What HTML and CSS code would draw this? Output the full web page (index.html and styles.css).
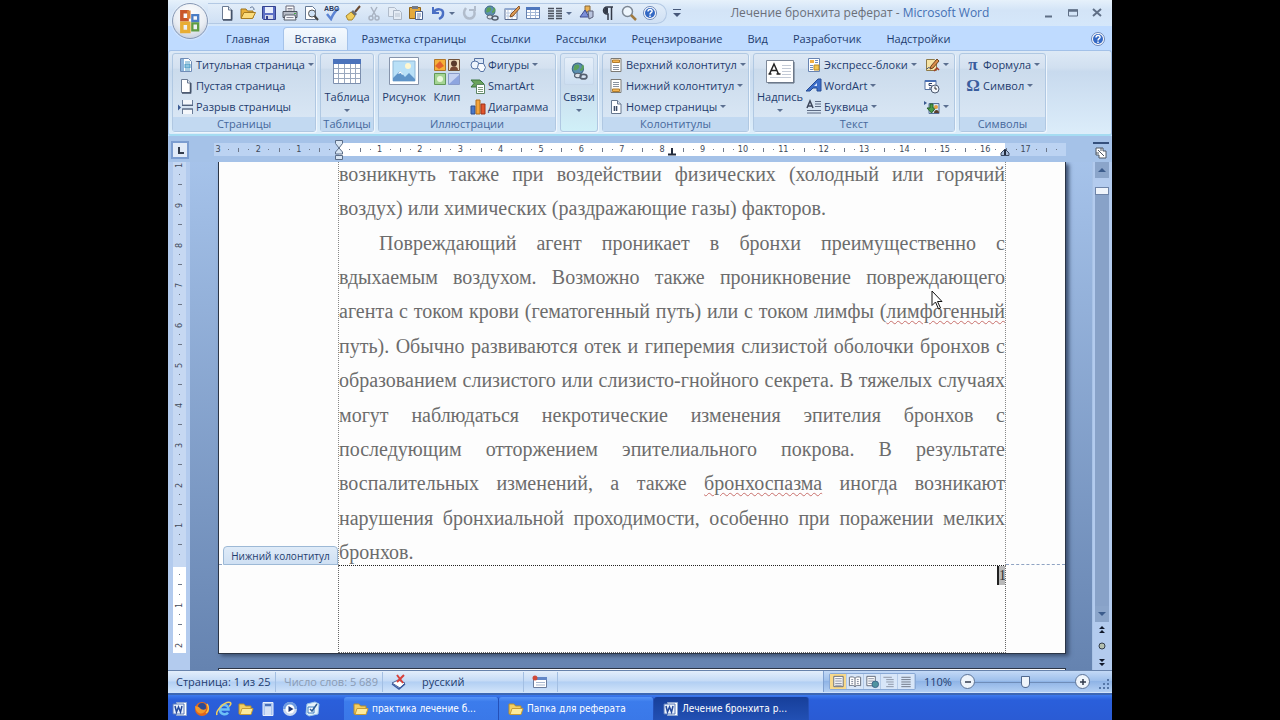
FILE: index.html
```
<!DOCTYPE html>
<html lang="ru">
<head>
    <meta charset="UTF-8">
    <meta name="viewport" content="width=device-width, initial-scale=1.0">
    <title>Лечение бронхита реферат - Microsoft Word</title>
    <link rel="stylesheet" href="styles.css">
</head>
<body>
    <!-- общие иконки -->
    <svg class="sprite" width="0" height="0">
        <symbol id="i-new" viewBox="0 0 16 16"><path d="M3.500 1.500h6l3.500 3.500v9.500h-9.500z" fill="#fff" stroke="#6a7a92"/><path d="M9.500 1.500v3.500h3.500" fill="#dfe7f2" stroke="#6a7a92"/><path d="M12.500 5v10H4" fill="none" stroke="#445268" stroke-width="1.500"/></symbol>
        <symbol id="i-folder" viewBox="0 0 16 16"><path d="M1 13V4h5l1.500 2H13v7z" fill="#e9b13a" stroke="#9d7420"/><path d="M1 13.500L4 7.500h11.500l-3 6z" fill="#fbdc7c" stroke="#a87d22"/><path d="M10 3c2-2 4-1 4 2" fill="none" stroke="#5a6f90"/></symbol>
        <symbol id="i-dir" viewBox="0 0 16 16"><path d="M1 13V3h5l1.500 2H13v8z" fill="#f4cf62" stroke="#b58d2c"/><path d="M2 13.500L4 7.500h11l-2 6z" fill="#fdeb9c" stroke="#c79d35"/></symbol>
        <symbol id="i-save" viewBox="0 0 16 16"><path d="M1.500 1.500h13v13h-12l-1-1z" fill="#5c6fc4" stroke="#33418f"/><path d="M4 2h8v6H4z" fill="#e8eefc"/><path d="M4 10h8v4H4z" fill="#d5d9ea"/><path d="M5 11h2v3H5z" fill="#33418f"/></symbol>
        <symbol id="i-print" viewBox="0 0 16 16"><path d="M4 7V1h8v6" fill="#fff" stroke="#667"/><path d="M1 6.500h14v6H1z" fill="#b6bbc6" stroke="#4c525e"/><path d="M3 10h10l1 5H2z" fill="#f4f6fa" stroke="#555c68"/><path d="M5.500 3.500h5M5.500 5h5M4.500 12.500h7" stroke="#889"/><path d="M12 8h2v1h-2z" fill="#4a4"/></symbol>
        <symbol id="i-preview" viewBox="0 0 16 16"><path d="M2.500 1.500h7l3 3v10h-10z" fill="#fff" stroke="#667a95"/><circle cx="9" cy="8.500" r="3.500" fill="#cfe2f6" stroke="#555"/><path d="M11.500 11l3.500 4" stroke="#444" stroke-width="2"/></symbol>
        <symbol id="i-brush" viewBox="0 0 16 16"><path d="M15 1l-5 6" stroke="#6a4a30" stroke-width="2"/><path d="M8 5l4 4-2 2-4-4z" fill="#6c7076"/><path d="M6 7l4 4-3 4H3L1 11z" fill="#f0cd5c" stroke="#a8862e"/></symbol>
        <symbol id="i-cut" viewBox="0 0 16 16"><path d="M5 2l5 9M11 2l-5 9" stroke="#a9b3c2" stroke-width="1.500"/><circle cx="5" cy="13" r="2" fill="none" stroke="#a9b3c2" stroke-width="1.500"/><circle cx="11" cy="13" r="2" fill="none" stroke="#a9b3c2" stroke-width="1.500"/></symbol>
        <symbol id="i-copy" viewBox="0 0 16 16"><path d="M1.500 2.500h6l2 2v7h-8z" fill="#e5ecf5" stroke="#b1bccb"/><path d="M6.500 5.500h6l2 2v7h-8z" fill="#e5ecf5" stroke="#aab5c4"/><path d="M8 9h5M8 11h5" stroke="#b9c3d0"/></symbol>
        <symbol id="i-paste" viewBox="0 0 16 16"><path d="M1.500 2.500h11v11h-11z" fill="#e3a93e" stroke="#8f6318"/><path d="M4 1h6v3H4z" fill="#757b88"/><path d="M7.500 6.500h7v8h-7z" fill="#fff" stroke="#4b6290"/><path d="M9 9h4M9 11h4M9 13h3" stroke="#6b82b0"/></symbol>
        <symbol id="i-undo" viewBox="0 0 16 16"><path d="M3 2v6h6" fill="none" stroke="#4a6fc4" stroke-width="2"/><path d="M3 8c3-5 11-5 10 1 0 3-2 4-4 5" fill="none" stroke="#4a6fc4" stroke-width="2.500"/></symbol>
        <symbol id="i-redo" viewBox="0 0 16 16"><path d="M4 3C0 8 3 14 8 13.500 13 13 13 8 12 6" fill="none" stroke="#b1bccb" stroke-width="2.500"/><path d="M7 5h6V1" fill="none" stroke="#b1bccb" stroke-width="2"/></symbol>
        <symbol id="i-link" viewBox="0 0 16 16"><circle cx="7" cy="6" r="5" fill="#5c8fb0" stroke="#3e6a86"/><path d="M4 3c3-2 5 0 4 2S4 8 3 7z" fill="#5aa05a"/><path d="M9 7c2 0 3-2 2-4" stroke="#5aa05a" stroke-width="2" fill="none"/><ellipse cx="7" cy="12" rx="3" ry="2" fill="#dde3ea" stroke="#556070"/><ellipse cx="12" cy="13" rx="3" ry="2" fill="none" stroke="#556070" stroke-width="1.500"/></symbol>
        <symbol id="i-edit" viewBox="0 0 16 16"><path d="M1 3.500h12v11H1z" fill="#fff" stroke="#56698c"/><path d="M1 3h12v2H1z" fill="#91a9d0"/><path d="M4 5v9M8 5v9M1 8h12M1 11h12" stroke="#b8c8df"/><path d="M15 1L7 9l-1 3 3-1 7-8z" fill="#dd9b53" stroke="#85532a"/></symbol>
        <symbol id="i-table" viewBox="0 0 16 16"><path d="M1.500 2.500h13v11h-13z" fill="#fff" stroke="#6580ad"/><path d="M1 2h14v3H1z" fill="#4f77bd"/><path d="M5.500 5v8M10.500 5v8M2 7.500h12M2 10.500h12" stroke="#a5b8d6"/></symbol>
        <symbol id="i-cols" viewBox="0 0 16 16"><path d="M1 3.500h6M1 6h6M1 8.500h6M1 11h6M1 13.500h6M9 3.500h6M9 6h6M9 8.500h6M9 11h6M9 13.500h6" stroke="#4a505c" stroke-width="1.500"/></symbol>
        <symbol id="i-shapes" viewBox="0 0 16 16"><path d="M4.500 1.500h9v7h-9z" fill="#dbe7f7" stroke="#5773a4"/><circle cx="5" cy="8" r="4" fill="#eef4fc" stroke="#5773a4"/><path d="M8.500 6.500h5l2 4-2 4h-3l-3-4z" fill="#f6f9fd" stroke="#5773a4"/></symbol>
        <symbol id="i-qshapes" viewBox="0 0 16 16"><path d="M6 1h5v6H6z" fill="#eab254" stroke="#8a6838"/><path d="M1 12l5-7 4 7z" fill="#7c8fd8" stroke="#3e4d92"/><path d="M9 6h5v6l-4 2z" fill="#b9c4de" stroke="#5a5f78"/></symbol>
        <symbol id="i-para" viewBox="0 0 16 16"><path d="M13 2H7a3.500 3.500 0 000 7h1v6M11.500 2v13" fill="none" stroke="#333a48" stroke-width="1.500"/><path d="M8 2.500H7a3 3 0 000 6h1z" fill="#333a48"/></symbol>
        <symbol id="i-lens" viewBox="0 0 16 16"><circle cx="6.500" cy="6.500" r="5" fill="#eef6fd" stroke="#7c8794" stroke-width="1.500"/><path d="M10 10l5 5" stroke="#a07a40" stroke-width="2.500"/></symbol>
        <symbol id="i-help" viewBox="0 0 16 16"><circle cx="8" cy="8" r="6.500" fill="#fff" stroke="#6c87b8"/><circle cx="8" cy="8" r="5" fill="#3469c4"/><path d="M6 6.500c0-3 4.500-2.500 4 0-.4 1.300-2 1.300-2 3M8 10.500v1.500" fill="none" stroke="#fff" stroke-width="1.500"/></symbol>
        <symbol id="i-cover" viewBox="0 0 16 16"><path d="M2.500 1.500h8l3 3v10h-11z" fill="#fff" stroke="#6f8cb7"/><path d="M3 2h3v12H3z" fill="#8fb6dc"/><path d="M7 5h5M7 7h5v4H7zM7 13h5" stroke="#4f9ac4" fill="#8cc4df"/></symbol>
        <symbol id="i-break" viewBox="0 0 16 16"><path d="M4.500 1v5h10V1M4.500 15v-5h10v5" fill="#f4f7fb" stroke="#6a7c98"/><path d="M4 6.500h11M4 10h11" stroke="#53627c"/><path d="M0 5.500l3 3-3 3z" fill="#3b5a92"/></symbol>
        <symbol id="i-smart" viewBox="0 0 16 16"><path d="M1 2h9l4 4-4 3H1l3-3.500z" fill="#6ba35c" stroke="#3c7441"/><path d="M6.500 6.500h8v9h-8z" fill="#fff" stroke="#5b8463"/><path d="M8 9.500h5M8 11.500h5M8 13.500h5" stroke="#7c9c7e"/></symbol>
        <symbol id="i-chart" viewBox="0 0 16 16"><path d="M1 7h4v8H1z" fill="#4a78c8" stroke="#2e4f8d"/><path d="M6 1h4v14H6z" fill="#f4a53c" stroke="#b06a16"/><path d="M11 5h4v10h-4z" fill="#e2552c" stroke="#9c351a"/></symbol>
        <symbol id="i-header" viewBox="0 0 16 16"><path d="M3 1.500h10v13H3z" fill="#fff" stroke="#7c7a74"/><path d="M4.500 3h7v2.500h-7z" fill="#f3b452" stroke="#b27d2c"/><path d="M5 8.500h6M5 10.500h6M5 12.500h6" stroke="#8a93a0"/></symbol>
        <symbol id="i-footer" viewBox="0 0 16 16"><path d="M3 1.500h10v13H3z" fill="#fff" stroke="#7c7a74"/><path d="M4.500 11h7v2.500h-7z" fill="#f3b452" stroke="#b27d2c"/><path d="M5 4.500h6M5 6.500h6M5 8.500h6" stroke="#8a93a0"/></symbol>
        <symbol id="i-pageno" viewBox="0 0 16 16"><path d="M3.500 1.500h6l3.500 3.500v9.500h-9.500z" fill="#fff" stroke="#66778e"/><path d="M9.500 1.500v3.500h3.500" fill="#dbe4f0" stroke="#66778e"/><path d="M5 7h5v5H5z" fill="#bcc6d6"/><path d="M6.500 7v5M8.500 7v5" stroke="#414c60"/></symbol>
        <symbol id="i-quick" viewBox="0 0 16 16"><path d="M2.500 1.500h11v13h-11z" fill="#fff" stroke="#6884b2"/><path d="M4 3h4v3H4z" fill="#f1ae43"/><path d="M9 3.500h3M9 5.500h3M4 8.500h3M4 10.500h3M4 12.500h3" stroke="#6d8bc0"/><path d="M8 8h5v5H8z" fill="#f4c54f" stroke="#b78b2a"/></symbol>
        <symbol id="i-wordart" viewBox="0 0 16 16"><path d="M0 13L12 1h3v12h-4v-3H7l-3 3z" fill="#3e6fc8" stroke="#274c94"/><path d="M8 8h3V5z" fill="#dce8fb"/></symbol>
        <symbol id="i-drop" viewBox="0 0 16 16"><path d="M1 9L4 2l3 7M2 7h4" fill="none" stroke="#3c465a" stroke-width="1.500"/><path d="M9 2.500h6M9 5h6M9 7.500h6M1 11.500h14M1 14h14" stroke="#5d6b84"/></symbol>
        <symbol id="i-sign" viewBox="0 0 16 16"><path d="M2.500 2.500h8l2 2v9h-10z" fill="#f6e2a4" stroke="#8e7a48"/><path d="M3 12c3-4 3 2 6-2" stroke="#40517c" fill="none"/><path d="M13 2l-6 7-1 3 3-1 6-7z" fill="#d98d4a" stroke="#714622"/><path d="M10 14l3-3 2 2" stroke="#a33c28" fill="none" stroke-width="1.500"/></symbol>
        <symbol id="i-date" viewBox="0 0 16 16"><path d="M1 2.500h11v9H1z" fill="#fff" stroke="#55719f"/><path d="M1 2h11v2H1z" fill="#4a70b4"/><path d="M8 5.500H5v2h2c2 .5 1 3-2 2.500" fill="none" stroke="#2d3f68"/><circle cx="11" cy="11" r="4" fill="#f2f6fb" stroke="#4c5a70"/><path d="M11 8.500V11h2" fill="none" stroke="#333"/></symbol>
        <symbol id="i-object" viewBox="0 0 16 16"><path d="M0 2l3 2-3 2z" fill="#3b5a92"/><path d="M5 4.500h10v10H5z" fill="#d6e5f4" stroke="#56719b"/><path d="M6 5v4H3l4.500 5 4-5H9V5z" fill="#4a9c48" stroke="#276029"/><circle cx="12" cy="8" r="2" fill="#e6a040"/><path d="M10 14c0-4 5-4 5 0" fill="#5a3d2c"/></symbol>
        <symbol id="i-min" viewBox="0 0 16 16"><path d="M4 11.500h7" stroke="#5f6f86" stroke-width="2"/></symbol>
        <symbol id="i-max" viewBox="0 0 16 16"><path d="M3.500 5h9v6h-9z" fill="none" stroke="#5f6f86"/><path d="M3 5.500h10" stroke="#5f6f86" stroke-width="2.500"/></symbol>
        <symbol id="i-close" viewBox="0 0 16 16"><path d="M4 4l8 7M12 4l-8 7" stroke="#5f6f86" stroke-width="2"/></symbol>
        <symbol id="i-word" viewBox="0 0 16 16"><path d="M4.500 1.500h10v13h-10z" fill="#fff" stroke="#8ea6d0"/><path d="M1 3h11v10H1z" fill="#eaf1fc" stroke="#5878b8"/><path d="M3 5l1.500 6L6.500 6l2 5L10 5" fill="none" stroke="#25499b" stroke-width="1.500"/></symbol>
        <symbol id="i-view" viewBox="0 0 16 16"><path d="M3.500 2.500h10v11h-10z" fill="#fff" stroke="#5f6878"/><path d="M5 5h7M5 7.500h7M5 10h7M5 12h7" stroke="#80889a"/></symbol>
    </svg>

    <div class="window">
        <header class="titlebar">
            <div class="qat">
                <button title="Создать"><svg><use href="#i-new"/></svg></button>
                <button title="Открыть"><svg><use href="#i-folder"/></svg></button>
                <button title="Сохранить"><svg><use href="#i-save"/></svg></button>
                <button title="Печать"><svg><use href="#i-print"/></svg></button>
                <button title="Просмотр"><svg><use href="#i-preview"/></svg></button>
                <button title="Правописание"><svg viewBox="0 0 16 16"><path d="M3 9l4 5c2-5 4-8 8-11" fill="none" stroke="#5c84d4" stroke-width="2.500"/><text x="0" y="6" class="tiny">ABC</text></svg></button>
                <button title="Формат по образцу"><svg><use href="#i-brush"/></svg></button>
                <button title="Вырезать"><svg><use href="#i-cut"/></svg></button>
                <button title="Копировать"><svg><use href="#i-copy"/></svg></button>
                <button title="Вставить"><svg><use href="#i-paste"/></svg></button>
                <button class="caret wide" title="Отменить"><svg><use href="#i-undo"/></svg></button>
                <button title="Повторить"><svg><use href="#i-redo"/></svg></button>
                <button title="Гиперссылка"><svg><use href="#i-link"/></svg></button>
                <button title="Нарисовать таблицу"><svg><use href="#i-edit"/></svg></button>
                <button title="Таблица"><svg><use href="#i-table"/></svg></button>
                <button class="caret wide" title="Колонки"><svg><use href="#i-cols"/></svg></button>
                <button title="Рисование"><svg><use href="#i-qshapes"/></svg></button>
                <button title="Непечатаемые знаки"><svg><use href="#i-para"/></svg></button>
                <button title="Масштаб"><svg><use href="#i-lens"/></svg></button>
                <button title="Справка"><svg><use href="#i-help"/></svg></button>
            </div>
            <button class="qat-more" title="Настройка панели"></button>
            <h1>Лечение бронхита реферат - <span>Microsoft Word</span></h1>
            <div class="controls">
                <button title="Свернуть"><svg><use href="#i-min"/></svg></button>
                <button title="Развернуть"><svg><use href="#i-max"/></svg></button>
                <button title="Закрыть"><svg><use href="#i-close"/></svg></button>
            </div>
        </header>

        <button class="office" title="Office">
            <svg viewBox="0 0 24 24">
                <path d="M11 4H5v7h6" fill="none" stroke="#c8562a" stroke-width="3"/>
                <path d="M11 3v7" stroke="#dd7f35" stroke-width="3"/>
                <path d="M14 7h5v5h-5z" fill="none" stroke="#4a7cc4" stroke-width="2"/>
                <path d="M5 14h6v7H5z" fill="none" stroke="#e8ad33" stroke-width="3"/>
                <path d="M14 14h5v6h-5z" fill="none" stroke="#5f9c42" stroke-width="2"/>
            </svg>
        </button>

        <nav class="tabs">
            <button>Главная</button>
            <button class="active">Вставка</button>
            <button>Разметка страницы</button>
            <button>Ссылки</button>
            <button>Рассылки</button>
            <button>Рецензирование</button>
            <button>Вид</button>
            <button>Разработчик</button>
            <button>Надстройки</button>
            <button class="help" title="Справка"><svg><use href="#i-help"/></svg></button>
        </nav>

        <div class="ribbon">
            <section class="group g-pages">
                <div class="tools">
                    <div class="col">
                        <button class="caret"><svg><use href="#i-cover"/></svg>Титульная страница</button>
                        <button><svg><use href="#i-new"/></svg>Пустая страница</button>
                        <button><svg><use href="#i-break"/></svg>Разрыв страницы</button>
                    </div>
                </div>
                <h2>Страницы</h2>
            </section>
            <section class="group g-tables">
                <div class="tools">
                    <button class="big caret">
                        <svg viewBox="0 0 30 28"><path d="M1.500 3.500h27v23h-27z" fill="#fff" stroke="#7c8fae"/><path d="M1 2h28v5H1z" fill="#4a72bb"/><path d="M6.500 7v19M12.500 7v19M18.500 7v19M23.500 7v19M2 11.500h26M2 16.500h26M2 21.500h26" stroke="#9aa8be"/></svg>
                        Таблица
                    </button>
                </div>
                <h2>Таблицы</h2>
            </section>
            <section class="group g-illus">
                <div class="tools">
                    <button class="big">
                        <svg viewBox="0 0 30 28"><path d="M.5.500h29v27H.5z" fill="#fff" stroke="#8694ab"/><path d="M4 4h22v20H4z" fill="#b9e0f7" stroke="#90b8d8"/><circle cx="19" cy="9" r="3" fill="#fff7d0"/><path d="M4 21l7-7 5 6 4-4 6 6v2H4z" fill="#5f94c8"/><path d="M11 14l-2 3 3-1 1 2 1-1z" fill="#fff"/></svg>
                        Рисунок
                    </button>
                    <button class="big">
                        <svg viewBox="0 0 30 28"><path d="M2.500 2.500h11v11h-11z" fill="#f5b13a" stroke="#b0762a"/><path d="M3 9l5-5 4 5-5 3z" fill="#e2632c"/><path d="M16.500 2.500h11v11h-11z" fill="#ecd8b8" stroke="#73543c"/><circle cx="22" cy="6.500" r="3" fill="#5b3b2c"/><path d="M18 13c0-5 8-5 8 0" fill="#7a4a34"/><path d="M2.500 16.500h11v11h-11z" fill="#a4d493" stroke="#639858"/><circle cx="8" cy="22" r="3" fill="#e9f7dd"/><path d="M16.500 16.500h11v11h-11z" fill="#c6d3f2" stroke="#8a9ccb"/><path d="M17 27l10-9v9z" fill="#8ea5df"/></svg>
                        Клип
                    </button>
                    <div class="col">
                        <button class="caret"><svg><use href="#i-shapes"/></svg>Фигуры</button>
                        <button><svg><use href="#i-smart"/></svg>SmartArt</button>
                        <button><svg><use href="#i-chart"/></svg>Диаграмма</button>
                    </div>
                </div>
                <h2>Иллюстрации</h2>
            </section>
            <section class="group g-links">
                <button class="big caret">
                    <span class="frame"><svg><use href="#i-link"/></svg></span>
                    Связи
                </button>
            </section>
            <section class="group g-head">
                <div class="tools">
                    <div class="col">
                        <button class="caret"><svg><use href="#i-header"/></svg>Верхний колонтитул</button>
                        <button class="caret"><svg><use href="#i-footer"/></svg>Нижний колонтитул</button>
                        <button class="caret"><svg><use href="#i-pageno"/></svg>Номер страницы</button>
                    </div>
                </div>
                <h2>Колонтитулы</h2>
            </section>
            <section class="group g-text">
                <div class="tools">
                    <button class="big caret">
                        <svg viewBox="0 0 30 28"><path d="M1.500 3.500h27v22h-27z" fill="#fff" stroke="#7d8899" /><path d="M29 5v21H3" fill="none" stroke="#5d6879"/><path d="M4.500 17L9 7l4.500 10M6 13.500h6M3.500 17h3M11.500 17h4" fill="none" stroke="#222" stroke-width="1.500"/><path d="M17 8.500h9M17 11.500h9M17 14.500h9M17 17.500h9M5 20.500h21" stroke="#c3cad6"/></svg>
                        Надпись
                    </button>
                    <div class="col">
                        <button class="caret"><svg><use href="#i-quick"/></svg>Экспресс-блоки</button>
                        <button class="caret"><svg><use href="#i-wordart"/></svg>WordArt</button>
                        <button class="caret"><svg><use href="#i-drop"/></svg>Буквица</button>
                    </div>
                    <div class="col extra">
                        <button class="caret" title="Строка подписи"><svg><use href="#i-sign"/></svg></button>
                        <button title="Дата и время"><svg><use href="#i-date"/></svg></button>
                        <button class="caret" title="Объект"><svg><use href="#i-object"/></svg></button>
                    </div>
                </div>
                <h2>Текст</h2>
            </section>
            <section class="group g-sym">
                <div class="tools">
                    <div class="col">
                        <button class="caret"><b>π</b>Формула</button>
                        <button class="caret"><b>Ω</b>Символ</button>
                    </div>
                </div>
                <h2>Символы</h2>
            </section>
        </div>

        <main class="workspace">
            <div class="corner"><button title="Табуляция"></button></div>
            <div class="hruler">
                <div class="scale">
                    <i>3</i><i>2</i><i>1</i><i></i><i>1</i><i>2</i><i>3</i><i>4</i><i>5</i><i>6</i><i>7</i><i>8</i><i>9</i><i>10</i><i>11</i><i>12</i><i>13</i><i>14</i><i>15</i><i>16</i><i>17</i><i></i>
                </div>
                <svg class="indent" viewBox="0 0 10 20"><path d="M1.500.500h7v3L5 8 1.500 3.500zM5 8l3.500 4v2h-7v-2zM1.500 15.500h7v4h-7z" fill="#d9e6f4" stroke="#5a6c86"/></svg>
                <svg class="tabstop" viewBox="0 0 8 8"><path d="M4 0v6M0 6.500h8" stroke="#222b3c" stroke-width="2"/></svg>
                <svg class="right-indent" viewBox="0 0 10 8"><path d="M1 7.500V5l4-4 4 4v2.500z" fill="#a9bcd8" stroke="#3b4a64"/><path d="M5 2v5" stroke="#222b3c" stroke-width="2"/></svg>
            </div>
            <div class="ruler-toggle"><button title="Линейка"><svg viewBox="0 0 16 16"><path d="M3 3h7v3h3v7H6v-3H3z" fill="#fff" stroke="#4d5662"/><path d="M5 5l6 6M8 3v3M3 8h3" stroke="#4d5662"/></svg></button></div>

            <div class="vruler">
                <div class="scale">
                    <i>1</i><i>9</i><i>8</i><i>7</i><i>6</i><i>5</i><i>4</i><i>3</i><i>2</i><i>1</i><i></i><i>1</i><i>2</i>
                </div>
            </div>
            <div class="canvas">
                <article class="page">
                    <div class="text">
                        <p>возникнуть также при воздействии физических (холодный или горячий</p>
                        <p class="last">воздух) или химических (раздражающие газы) факторов.</p>
                        <p class="first">Повреждающий агент проникает в бронхи преимущественно с</p>
                        <p>вдыхаемым воздухом. Возможно также проникновение повреждающего</p>
                        <p>агента с током крови (гематогенный путь) или с током лимфы (<u>лимфогенный</u></p>
                        <p>путь). Обычно развиваются отек и гиперемия слизистой оболочки бронхов с</p>
                        <p>образованием слизистого или слизисто-гнойного секрета. В тяжелых случаях</p>
                        <p>могут наблюдаться некротические изменения эпителия бронхов с</p>
                        <p>последующим отторжением эпителиального покрова. В результате</p>
                        <p>воспалительных изменений, а также <u>бронхоспазма</u> иногда возникают</p>
                        <p>нарушения бронхиальной проходимости, особенно при поражении мелких</p>
                        <p class="last">бронхов.</p>
                    </div>
                    <footer><span>1</span></footer>
                    <div class="footer-tag">Нижний колонтитул</div>
                </article>
                <div class="next-page"></div>
                <svg class="cursor" viewBox="0 0 12 20"><path d="M1 1v14.500l3.500-3.500 3 7 2-1-3-6.500H11z" fill="#fff" stroke="#111"/></svg>
            </div>
            <div class="scrollbar">
                <button class="up" title="Вверх"></button>
                <div class="thumb"></div>
                <div class="track"></div>
                <button class="down" title="Вниз"></button>
                <button class="nav" title="Предыдущая страница"><svg viewBox="0 0 8 8"><path d="M4 0l3 3H1zM4 4l3 3H1z" fill="#10182a"/></svg></button>
                <button class="nav" title="Выбор объекта"><svg viewBox="0 0 8 8"><circle cx="4" cy="4" r="3" fill="#b4bfae" stroke="#333d4a"/></svg></button>
                <button class="nav" title="Следующая страница"><svg viewBox="0 0 8 8"><path d="M4 4L1 1h6zM4 8L1 5h6z" fill="#10182a"/></svg></button>
            </div>
        </main>

        <div class="statusbar">
            <span class="cell s-page">Страница: 1 из 25</span>
            <span class="cell s-words">Число слов: 5 689</span>
            <span class="cell s-lang"><svg viewBox="0 0 16 16"><path d="M1 9l6-3 7 3-5 5z" fill="#fff" stroke="#4b6498"/><path d="M1 10l7 5 6-5" fill="none" stroke="#3d5ca0" stroke-width="1.500"/><path d="M6 1l6 8M13 1L6 8" stroke="#d8403a" stroke-width="2"/></svg>русский</span>
            <span class="cell s-macro"><svg viewBox="0 0 16 16"><path d="M1.500 3.500h13v10h-13z" fill="#fff" stroke="#6b7c9c"/><path d="M2 3h13v3H2z" fill="#6387c7"/><path d="M4 8.500h9M4 11h9" stroke="#a8b7cf"/><circle cx="3" cy="4" r="2.500" fill="#cf4a3a"/></svg></span>
            <div class="status-right">
                <div class="views">
                    <button class="on" title="Разметка страницы"><svg><use href="#i-view"/></svg></button>
                    <button title="Режим чтения"><svg viewBox="0 0 16 16"><path d="M8 4.500C6 2.500 4 3 2 3.500v9c2-.5 4-1 6 1 2-2 4-1.500 6-1v-9c-2-.5-4-1-6 1zM8 4.500v9" fill="#fff" stroke="#5f6878"/><path d="M4 6h2M4 8h2M4 10h2M10 6h2M10 8h2M10 10h2" stroke="#80889a"/></svg></button>
                    <button title="Веб-документ"><svg viewBox="0 0 16 16"><path d="M2.500 2.500h9v10h-9z" fill="#fff" stroke="#5f6878"/><path d="M4 5h6M4 7.500h6M4 10h6" stroke="#80889a"/><circle cx="11.500" cy="11" r="3.500" fill="#4f93a0" stroke="#3c6488"/></svg></button>
                    <button title="Структура"><svg viewBox="0 0 16 16"><path d="M2 3.500h9M5 6h8M5 8.500h8M7 11h6M5 13.500h8" stroke="#8b93a3"/></svg></button>
                    <button title="Черновик"><svg viewBox="0 0 16 16"><path d="M3 3.500h10M3 6h10M3 8.500h10M3 11h10M3 13.500h10" stroke="#6b7382"/></svg></button>
                </div>
                <label for="zoom">110%</label>
                <button class="round" title="Уменьшить"><svg viewBox="0 0 16 16"><path d="M4 8h8" stroke="#303a4c" stroke-width="2"/></svg></button>
                <input type="range" id="zoom" min="0" max="100" value="50">
                <button class="round" title="Увеличить"><svg viewBox="0 0 16 16"><path d="M4 8h8M8 4v8" stroke="#303a4c" stroke-width="2"/></svg></button>
                <svg class="grip" viewBox="0 0 12 12"><path d="M9 1h2v2H9zM9 5h2v2H9zM5 5h2v2H5zM9 9h2v2H9zM5 9h2v2H5zM1 9h2v2H1z" fill="#5577a8"/></svg>
            </div>
        </div>

        <div class="taskbar">
            <div class="quick">
                <button title="Word"><svg><use href="#i-word"/></svg></button>
                <button title="Firefox"><svg viewBox="0 0 16 16"><circle cx="8" cy="8" r="7" fill="#e0661c"/><circle cx="8" cy="6" r="4" fill="#2c4a94"/><path d="M1 5c2 1 3 0 5 2 1 2 4 2 6 1-1 6-10 7-11-3z" fill="#f59a2c"/><path d="M13 3c2 3 2 7-1 9" fill="none" stroke="#f7c54c" stroke-width="1.500"/></svg></button>
                <button title="Internet Explorer"><svg viewBox="0 0 16 16"><path d="M3.500 8.500h9C12.500 2.500 4 2.500 4 8.500c0 5 6 6 8 3" fill="none" stroke="#6cc0f6" stroke-width="2.500"/><path d="M1 14C-1 10 9 0 14 1.500c2 1 0 3-1 4" fill="none" stroke="#f2cf5c" stroke-width="1.500"/></svg></button>
                <button title="Проводник"><svg><use href="#i-dir"/></svg></button>
                <button title="Калькулятор"><svg viewBox="0 0 16 16"><path d="M3 1.500h10v13H3z" fill="#a9c4ee" stroke="#e7effc"/><path d="M5 3h6v2H5z" fill="#4a70b8"/><path d="M5 7h6M5 9h6M5 11h6M5 13h6" stroke="#fff"/></svg></button>
                <button title="Проигрыватель"><svg viewBox="0 0 16 16"><circle cx="8" cy="8" r="7" fill="#c9d8f0"/><path d="M1 8a7 7 0 0114 0z" fill="#6f9be0"/><circle cx="8" cy="8" r="4.500" fill="#fff"/><path d="M6.500 5l5 3-5 3z" fill="#1d3474"/></svg></button>
                <button title="Рабочий стол"><svg viewBox="0 0 16 16"><path d="M3 3l8-2 4 2-1 10-9 2-3-2z" fill="#e6f2fb" stroke="#9cc6e8"/><path d="M4 6h6v6H4z" fill="#fff" stroke="#3a7cc0"/><path d="M6 8l2 2 5-7" fill="none" stroke="#2d5c94" stroke-width="1.500"/></svg></button>
            </div>
            <button class="task"><svg><use href="#i-dir"/></svg>практика лечение б...</button>
            <button class="task"><svg><use href="#i-dir"/></svg>Папка для реферата</button>
            <button class="task current"><svg><use href="#i-word"/></svg>Лечение бронхита р...</button>
        </div>
    </div>
</body>
</html>
```
FILE: styles.css
```
* {
    box-sizing: border-box;
}
body {
    margin: 0;
    padding: 0 168px;
    height: 100vh;
    overflow: hidden;
    background: #000;
    color: #1e3c6e;
    font-family: "Open Sans", "Noto Sans", sans-serif;
    font-size: 11px;
}
button {
    margin: 0;
    padding: 0;
    border: none;
    background: none;
    color: inherit;
    font: inherit;
}
h1, h2, p {
    margin: 0;
    font-weight: normal;
}
svg {
    display: block;
    flex: none;
    width: 16px;
    height: 16px;
}
.sprite {
    position: absolute;
    width: 0;
    height: 0;
}
.tiny {
    font: bold 7px "Liberation Sans", sans-serif;
    fill: #2c3a5c;
}
.window {
    position: relative;
    display: flex;
    flex-direction: column;
    height: 100vh;
    overflow: hidden;
    background: #bfdbff;
}

/* заголовок */
.titlebar {
    display: flex;
    align-items: center;
    height: 26px;
    padding: 0 7px 0 40px;
    background: linear-gradient(#e6f1fb, #d3e4f7 40%, #d5e7fa);
}
.qat {
    display: flex;
    align-items: center;
    height: 21px;
    padding: 0 6px 0 8px;
    border: 1px solid #b3c9e4;
    border-left: none;
    border-radius: 0 11px 11px 0;
    background: linear-gradient(#e2edf9, #cfe0f4);
}
.qat button {
    display: flex;
    align-items: center;
    justify-content: center;
    width: 21px;
}
.qat .wide {
    width: 33px;
}
.caret::after {
    content: "";
    flex: none;
    margin-left: 3px;
    border: 3px solid transparent;
    border-top-color: #5b6f90;
    border-bottom: none;
}
.qat-more {
    width: 8px;
    height: 8px;
    margin-left: 6px;
    border-top: 1px solid #46587a;
}
.qat-more::after {
    content: "";
    display: block;
    margin-top: 2px;
    border: 4px solid transparent;
    border-top-color: #46587a;
    border-bottom: none;
}
.titlebar h1 {
    flex: 1;
    padding-right: 2px;
    color: #6a6f78;
    font-size: 12px;
    line-height: 24px;
    text-align: center;
}
.titlebar h1 span {
    color: #4470b4;
}
.controls {
    display: flex;
    gap: 8px;
}
.office {
    position: absolute;
    top: 3px;
    left: 4px;
    display: flex;
    align-items: center;
    justify-content: center;
    width: 36px;
    height: 36px;
    border: 1px solid #8798b4;
    border-radius: 50%;
    background: radial-gradient(circle at 50% 30%, #fff, #e9edf3 55%, #b6c1d2);
    box-shadow: 0 0 2px #fff;
}
.office svg {
    width: 28px;
    height: 28px;
}

/* вкладки */
.tabs {
    display: flex;
    gap: 1px;
    height: 24px;
    padding: 1px 6px 0 46px;
    background: #bfdbff;
}
.tabs button {
    padding: 0 12px;
    line-height: 20px;
}
.tabs .active {
    padding: 0 11px;
    border: 1px solid #a5c3ea;
    border-bottom: none;
    border-radius: 4px 4px 0 0;
    background: linear-gradient(#f4f9fe, #e2edf9);
}
.tabs .help {
    margin-left: auto;
    padding: 0;
}

/* лента */
.ribbon {
    display: flex;
    gap: 4px;
    height: 86px;
    padding: 2px 3px;
    border: 1px solid #a3c1e8;
    border-bottom: 2px solid #a5dcf2;
    border-radius: 3px;
    background: linear-gradient(#dde9f6, #d1e0f0 20%, #c8daee 25%, #dcedfa);
}
.group {
    display: flex;
    flex-direction: column;
    border: 1px solid #b0c8e2;
    border-radius: 3px;
    background: linear-gradient(#dde8f4, #d4e1f0 18%, #cbdbec 20%, #dce9f6);
    box-shadow: 1px 1px 0 #eff6fd;
}
.group h2 {
    flex: none;
    height: 14px;
    background: #c2d9f1;
    color: #46689c;
    font-size: 11px;
    line-height: 14px;
    text-align: center;
}
.tools {
    display: flex;
    flex: 1;
    min-height: 0;
}
.g-pages { width: 144px; }
.g-tables { width: 54px; }
.g-illus { width: 178px; }
.g-links { width: 38px; background: linear-gradient(#dbe7f5, #cbdced 40%, #d0f0f8); }
.g-head { width: 147px; }
.g-text { width: 202px; }
.g-sym { width: 87px; }
.col {
    padding-left: 5px;
}
.col button {
    display: flex;
    align-items: center;
    height: 21px;
    gap: 2px;
    white-space: nowrap;
}
.col .caret::after {
    margin-left: 1px;
}
.col b {
    width: 16px;
    color: #3a5d9e;
    font: bold 17px "Liberation Serif", serif;
    text-align: center;
}
.big {
    display: flex;
    flex-direction: column;
    align-items: center;
    flex: 1;
    padding-top: 3px;
    line-height: 24px;
}
.big svg {
    width: 30px;
    height: 28px;
}
.big.caret::after {
    margin: 0;
}
.g-illus .big {
    flex: none;
    width: 50px;
}
.g-illus .big + .big {
    width: 36px;
}
.g-text .big {
    flex: none;
    width: 52px;
}
.g-text .col {
    padding-left: 0;
}
.g-text .extra {
    margin-left: auto;
    padding-right: 5px;
}
.frame {
    display: flex;
    justify-content: center;
    align-items: center;
    width: 30px;
    height: 28px;
    border: 1px solid #c6d7ea;
    border-radius: 2px;
    background: linear-gradient(#e6eff9, #cddff2);
}
.frame svg {
    width: 18px;
    height: 18px;
}

/* рабочая область */
.workspace {
    display: grid;
    grid-template-columns: 22px 1fr 20px;
    grid-template-rows: 26px 1fr;
    flex: 1;
    min-height: 0;
    background: linear-gradient(#a9c6ed, #6583b0);
}
.corner, .hruler, .ruler-toggle {
    background: #a5c2e8;
}
.corner {
    padding: 5px 0 0 3px;
}
.corner button {
    width: 18px;
    height: 18px;
    border: 2px solid #7c9dd0;
    background: linear-gradient(#333c4c, #333c4c) 5px 4px / 2px 7px no-repeat, linear-gradient(#333c4c, #333c4c) 5px 9px / 6px 2px no-repeat, #e2ebf8;
}
.hruler {
    position: relative;
    padding: 7px 26px 0 24px;
}
.scale {
    display: grid;
    overflow: hidden;
    color: #404a5a;
    font: 9px "DejaVu Sans Condensed", sans-serif;
}
.scale i {
    font-style: normal;
    text-align: center;
}
.hruler .scale {
    grid-template-columns: repeat(21, 1fr);
    grid-auto-flow: column;
    grid-auto-columns: 0;
    height: 13px;
    padding-left: 4px;
    background: linear-gradient(to right, #bcd3f2 125px, #fff 125px, #fff calc(100% - 61px), #bcd3f2 calc(100% - 61px));
}
.hruler .scale i {
    width: 40px;
    margin-left: -20px;
    line-height: 13px;
    background: linear-gradient(#6d7789, #6d7789) 0 5px / 1px 4px no-repeat, linear-gradient(#6d7789, #6d7789) 10px 6px / 1px 1px no-repeat, linear-gradient(#6d7789, #6d7789) 30px 6px / 1px 1px no-repeat;
}
.indent {
    position: absolute;
    left: 144px;
    top: 4px;
    width: 10px;
    height: 20px;
}
.tabstop {
    position: absolute;
    left: 478px;
    top: 12px;
    width: 8px;
    height: 8px;
}
.right-indent {
    position: absolute;
    right: 82px;
    top: 12px;
    width: 10px;
    height: 8px;
}
.ruler-toggle {
    padding: 6px 0 0 1px;
}
.ruler-toggle button {
    display: flex;
    padding-top: 1px;
    border-top: 2px solid #35507c;
}
.vruler {
    padding: 0 4px 0 5px;
    background: #b3cbee;
    overflow: hidden;
}
.vruler .scale {
    grid-template-rows: repeat(13, 40px);
    height: 491px;
    background: linear-gradient(#c6d8f2 405px, #fff 405px);
}
.vruler .scale i {
    width: 13px;
    margin-top: -17px;
    height: 40px;
    line-height: 13px;
    writing-mode: vertical-rl;
    transform: rotate(180deg);
    background: linear-gradient(#6d7789, #6d7789) 4px 0 / 4px 1px no-repeat, linear-gradient(#6d7789, #6d7789) 6px 10px / 1px 1px no-repeat, linear-gradient(#6d7789, #6d7789) 6px 30px / 1px 1px no-repeat;
}
.canvas {
    position: relative;
    display: flex;
    flex-direction: column;
    padding: 0 26px 0 28px;
    overflow: hidden;
}
.page {
    position: relative;
    display: flex;
    flex-direction: column;
    flex: none;
    height: 492px;
    padding: 0 59px 0 119px;
    border: 1px solid #2b3546;
    border-top: none;
    background: #fdfdfd;
    box-shadow: 3px 2px 4px #3c4f70;
}
.text {
    display: flex;
    flex-direction: column;
    justify-content: space-between;
    height: 408px;
    margin-top: -3px;
    margin-bottom: -2px;
    border-left: 1px dotted #888;
    border-right: 1px dotted #888;
    color: #6c6c6c;
    font: 20px/30px "Liberation Serif", serif;
}
.text p {
    text-align: justify;
    text-align-last: justify;
    white-space: nowrap;
}
.text .first {
    padding-left: 40px;
}
.text .last {
    text-align-last: left;
}
.text u {
    text-decoration: underline wavy #c8706c 1px;
    text-underline-offset: 2px;
}
.page footer {
    flex: 1;
    border: 1px dotted #666;
    border-top-color: #222;
    text-align: right;
}
.page footer span {
    display: inline-block;
    width: 8px;
    height: 19px;
    border-left: 2px solid #222;
    background: #b9b9b9;
    color: #333;
    font: 14px/19px "Liberation Serif", serif;
}
.page::before, .page::after {
    content: "";
    position: absolute;
    top: 402px;
    border-top: 1px dashed #8fa3c2;
}
.page::before {
    left: 0;
    width: 119px;
}
.page::after {
    right: 0;
    width: 59px;
}
.footer-tag {
    position: absolute;
    left: 4px;
    top: 384px;
    width: 115px;
    height: 19px;
    border: 1px solid #9db9d6;
    border-radius: 4px 4px 0 0;
    background: linear-gradient(#dfebf8, #cfe0f3);
    font-size: 10px;
    line-height: 19px;
    text-align: center;
    white-space: nowrap;
}
.next-page {
    flex: none;
    height: 10px;
    margin-top: 14px;
    border: 1px solid #2b3546;
    background: #fdfdfd;
}
.cursor {
    position: absolute;
    left: 741px;
    top: 128px;
    width: 12px;
    height: 20px;
}
.scrollbar {
    display: flex;
    flex-direction: column;
    align-items: center;
    padding-right: 1px;
    border-left: 1px solid #a9c3e6;
    background: #b3cbee;
}
.scrollbar .up, .scrollbar .down {
    width: 14px;
    height: 16px;
    background: #8ba5ca;
}
.scrollbar .up::after, .scrollbar .down::after {
    content: "";
    display: block;
    margin: 0 auto;
    width: 0;
    border: 4px solid transparent;
    border-bottom-color: #3c5c8c;
    border-top: none;
}
.scrollbar .down::after {
    border-top: 4px solid #3c5c8c;
    border-bottom: none;
}
.thumb {
    width: 14px;
    height: 8px;
    margin-top: 9px;
    border: 1px solid #6e84a8;
    background: #eff4fb;
}
.track {
    flex: 1;
    width: 14px;
    background: #88a2c8;
}
.scrollbar .nav {
    display: flex;
    align-items: center;
    height: 16px;
}
.scrollbar .nav svg {
    width: 8px;
    height: 8px;
}

/* строка состояния */
.statusbar {
    display: flex;
    align-items: center;
    height: 25px;
    padding-bottom: 1px;
    border-top: 1px solid #6782ab;
    border-bottom: 2px solid #3c67b4;
    background: linear-gradient(#e3eefb, #c5dbf6 45%, #b2cff3 50%, #d3e5fa);
}
.cell {
    display: flex;
    align-items: center;
    height: 20px;
    padding-left: 8px;
    border-right: 1px solid #a3bfe3;
    white-space: nowrap;
}
.s-page { width: 108px; }
.s-words { width: 107px; color: #8b9bb3; }
.s-lang { width: 141px; gap: 15px; }
.s-macro { width: 34px; }
.status-right {
    display: flex;
    align-items: center;
    align-self: stretch;
    width: 289px;
    margin-left: auto;
    padding-left: 5px;
    border-left: 1px solid #7fa0d0;
    background: linear-gradient(#c3d9f6, #9fc0ec 45%, #8fb4e6 50%, #b3cff3);
}
.views {
    display: flex;
    height: 17px;
    margin-right: 8px;
    border: 1px solid #89a9d6;
    border-radius: 2px;
    background: #d8e6f8;
}
.views button {
    width: 17px;
    border-right: 1px solid #b5cbe8;
}
.views svg {
    height: 15px;
}
.views .on {
    background: #f8d98a;
}
.round {
    display: flex;
    align-items: center;
    justify-content: center;
    flex: none;
    width: 15px;
    height: 15px;
    border: 1px solid #5b7296;
    border-radius: 50%;
    background: #eef4fb;
}
.round svg {
    width: 12px;
    height: 12px;
}
.statusbar label {
    width: 36px;
}
#zoom {
    flex: 1;
    min-width: 0;
    height: 14px;
    margin: 0;
    appearance: none;
    background: linear-gradient(#6f8db9, #6f8db9) 0 7px / 100% 1px no-repeat;
}
#zoom::-webkit-slider-thumb {
    appearance: none;
    width: 9px;
    height: 12px;
    border: 1px solid #4f688f;
    border-radius: 1px 1px 5px 5px;
    background: #eef4fb;
}
.grip {
    width: 12px;
    height: 12px;
    margin: 4px 2px 0 8px;
}

/* панель задач */
.taskbar {
    display: flex;
    height: 25px;
    padding-top: 2px;
    background: linear-gradient(#3d7bee, #2a5fdb 20%, #2a5bd4);
    color: #fff;
    font-family: "DejaVu Sans Condensed", sans-serif;
    font-size: 10px;
}
.quick {
    display: flex;
    width: 176px;
    padding-left: 1px;
}
.quick button {
    display: flex;
    align-items: center;
    justify-content: center;
    width: 22px;
}
.task {
    display: flex;
    align-items: center;
    gap: 3px;
    width: 155px;
    padding-left: 9px;
    border-right: 1px solid #2450b8;
    border-radius: 3px 3px 0 0;
    background: linear-gradient(#5795f7, #3c7cec 20%, #3a78e8);
    white-space: nowrap;
}
.task.current {
    background: linear-gradient(#173f9a, #2250b4);
}
```
